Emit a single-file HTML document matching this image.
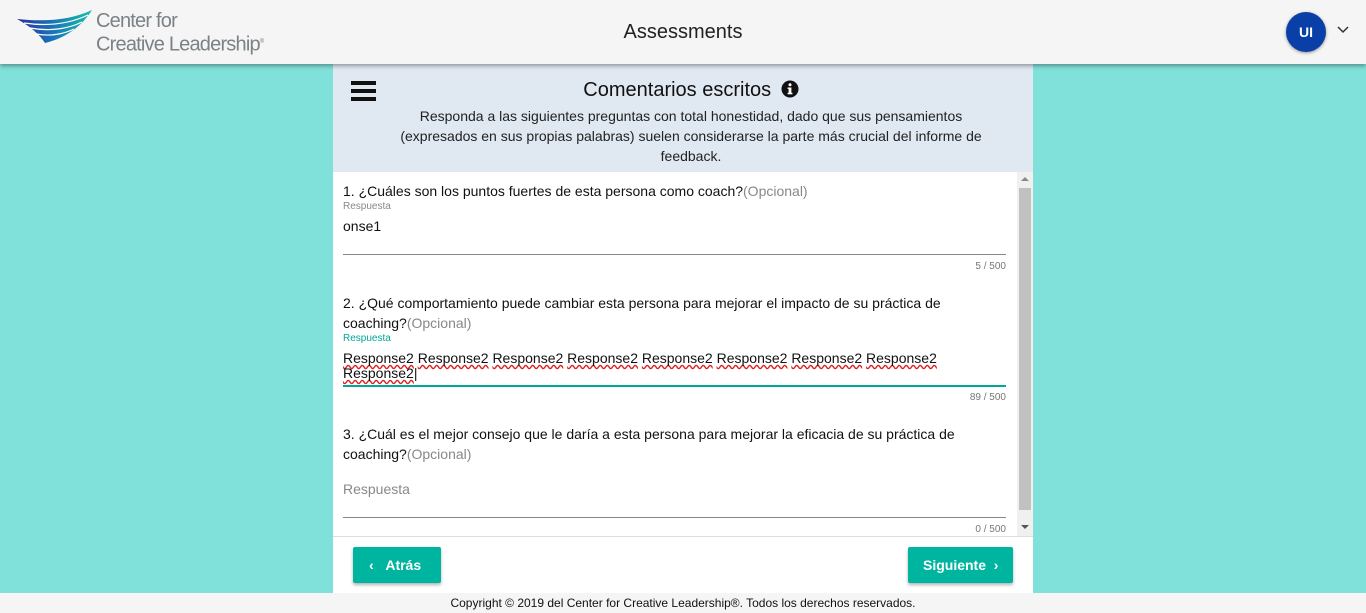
<!DOCTYPE html>
<html><head><meta charset="utf-8"><style>
*{box-sizing:border-box;margin:0;padding:0}
body{width:1366px;height:613px;overflow:hidden;background:#80e0da;font-family:"Liberation Sans",Arial,sans-serif;position:relative}
.top{position:absolute;left:0;top:0;width:1366px;height:64px;background:#f5f5f5;box-shadow:0 2px 4px rgba(0,0,0,.35);z-index:2}
.title{position:absolute;left:0;width:1366px;top:21px;text-align:center;font-size:20px;color:#222}
.logo{position:absolute;left:16px;top:8px}
.logot{position:absolute;left:96px;top:11px;color:#7a8286;font-size:20px;line-height:21px;letter-spacing:-.8px}
.av{position:absolute;left:1286px;top:12px;width:40px;height:40px;border-radius:50%;background:#0a3fa8;color:#fff;font-weight:bold;font-size:14px;text-align:center;line-height:40px;box-shadow:0 1px 3px rgba(0,0,0,.4)}
.card{position:absolute;left:333px;top:64px;width:700px;height:529px;background:#fff}
.hd{height:108px;background:#e0e8f2;position:relative;text-align:center}
.hd h1{font-weight:normal;font-size:20px;color:#111;padding-top:15px;padding-left:16px}
.hd p{font-size:14px;color:#222;line-height:20px;width:600px;margin:4px auto 0;position:relative;left:8px}
.ham{position:absolute;left:18px;top:17px;width:25px}
.ham i{display:block;height:4px;background:#111;margin-bottom:4px}
.q{position:absolute;left:10px;width:663px;font-size:14px;color:#111;line-height:20px}
.op{color:#888}
.lab{font-size:10px;color:#888;line-height:12px}
.line{position:absolute;left:10px;width:663px;height:1px;background:#888}
.cnt{position:absolute;right:27px;font-size:10px;color:#777}
.sp{text-decoration:underline wavy #e02020;text-decoration-skip-ink:none}
.sb{position:absolute;left:684px;top:108px;width:16px;height:364px;background:#f0f0f0}
.btn{position:absolute;top:483px;height:36px;background:#00b5a0;color:#fff;font-weight:bold;font-size:14px;line-height:36px;border-radius:2px;box-shadow:0 2px 3px rgba(0,0,0,.3)}
.foot{position:absolute;left:0;top:593px;width:1366px;height:20px;background:#f5f5f5;text-align:center;font-size:12px;line-height:20px;color:#111}
</style></head><body>
<div class="top">
<svg class="logo" width="80" height="42" viewBox="0 0 80 42"><defs><linearGradient id="g" x1="0" x2="1"><stop offset="0" stop-color="#2a2f9a"/><stop offset=".45" stop-color="#1a70b8"/><stop offset="1" stop-color="#19c0a8"/></linearGradient></defs>
<path d="M1 11 C30 14 55 12 76 2 C66 18 50 30 29 35 C24 27 14 18 1 11Z" fill="url(#g)"/>
<path d="M8 15 C35 19 55 15 72 7 M14 20 C36 24 54 20 66 14 M20 26 C36 29 50 25 58 21" stroke="#fff" stroke-width="1.2" fill="none"/></svg>
<div class="logot">Center for<br>Creative Leadership<sup style="font-size:6px">®</sup></div>
<div class="title">Assessments</div>
<div class="av">UI</div>
<svg style="position:absolute;left:1337px;top:26px" width="12" height="8"><path d="M1 1l5 5 5-5" stroke="#333" stroke-width="1.5" fill="none"/></svg>
</div>
<div class="card">
<div class="hd"><div class="ham"><i></i><i></i><i></i></div>
<h1>Comentarios escritos <svg width="18" height="18" viewBox="0 0 18 18" style="vertical-align:-2px;margin-left:4px"><circle cx="9" cy="9" r="8.5" fill="#111"/><rect x="7.6" y="7.5" width="2.8" height="6.5" fill="#fff"/><rect x="6.6" y="12.8" width="4.8" height="1.5" fill="#fff"/><rect x="6.6" y="7.5" width="3" height="1.4" fill="#fff"/><circle cx="9" cy="4.8" r="1.5" fill="#fff"/></svg></h1>
<p>Responda a las siguientes preguntas con total honestidad, dado que sus pensamientos (expresados en sus propias palabras) suelen considerarse la parte más crucial del informe de feedback.</p></div>
<div class="q" style="top:117px">1. ¿Cuáles son los puntos fuertes de esta persona como coach?<span class="op">(Opcional)</span><div class="lab">Respuesta</div><div style="margin-top:3px">onse1</div></div>
<div class="line" style="top:190px"></div><div class="cnt" style="top:197px">5 / 500</div>
<div class="q" style="top:229px">2. ¿Qué comportamiento puede cambiar esta persona para mejorar el impacto de su práctica de coaching?<span class="op">(Opcional)</span><div class="lab" style="color:#00a896">Respuesta</div><div style="line-height:15px;margin-top:6px"><span class="sp">Response2</span> <span class="sp">Response2</span> <span class="sp">Response2</span> <span class="sp">Response2</span> <span class="sp">Response2</span> <span class="sp">Response2</span> <span class="sp">Response2</span> <span class="sp">Response2</span><br><span class="sp">Response2</span>|</div></div>
<div class="line" style="top:321px;height:2px;background:#00a896"></div><div class="cnt" style="top:328px">89 / 500</div>
<div class="q" style="top:360px">3. ¿Cuál es el mejor consejo que le daría a esta persona para mejorar la eficacia de su práctica de coaching?<span class="op">(Opcional)</span><div class="op" style="margin-top:15px">Respuesta</div></div>
<div class="line" style="top:453px"></div><div class="cnt" style="top:460px">0 / 500</div>
<div class="sb"><div style="position:absolute;left:2px;top:16px;width:12px;height:322px;background:#c1c1c1"></div>
<svg style="position:absolute;left:4px;top:4px" width="8" height="6"><path d="M0 5L4 1 8 5Z" fill="#888"/></svg>
<svg style="position:absolute;left:4px;top:352px" width="8" height="6"><path d="M0 1L4 5 8 1Z" fill="#555"/></svg></div>
<div style="position:absolute;left:0;top:472px;width:700px;height:1px;background:#ddd"></div>
<div class="btn" style="left:20px;width:88px;padding-left:16px">‹ &nbsp;&nbsp;Atrás</div>
<div class="btn" style="left:575px;width:105px;padding-left:15px">Siguiente &nbsp;›</div>
</div>
<div class="foot">Copyright © 2019 del Center for Creative Leadership®. Todos los derechos reservados.</div>
</body></html>
